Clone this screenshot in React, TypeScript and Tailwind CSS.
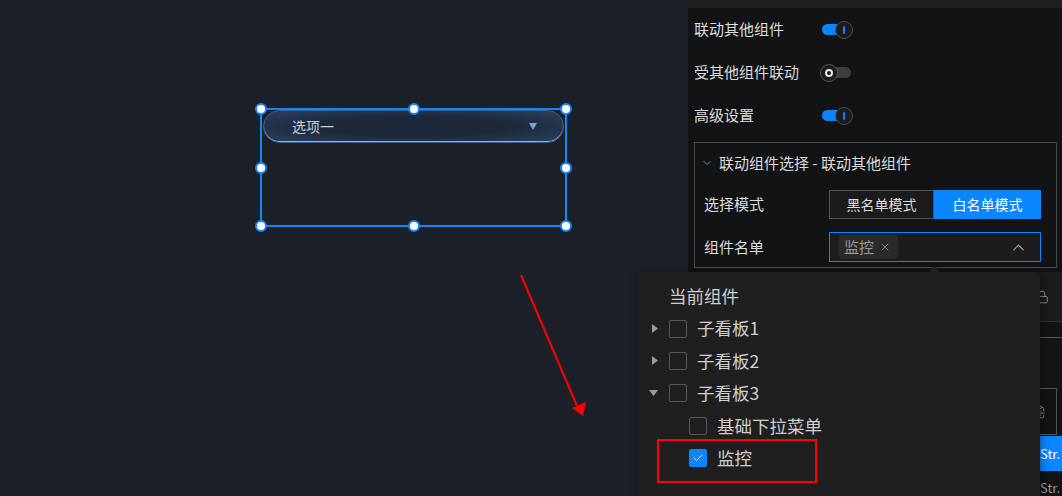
import React from "react";
import { ChevronDown, ChevronUp, X, Lock, Check, ClipboardCopy } from "lucide-react";

function ToggleOn() {
  return (
    <div className="relative w-[32px] h-[18px]">
      <div className="absolute left-[1px] top-[3.5px] w-[26px] h-[11px] rounded-full bg-[#0a84ff]" />
      <div className="absolute right-0 top-0 w-[18px] h-[18px] rounded-full bg-[#1b1c1e] border border-[#4d4d4d] flex items-center justify-center">
        <div className="w-[2px] h-[8px] bg-[#0a84ff] rounded-sm" />
      </div>
    </div>
  );
}

function ToggleOff() {
  return (
    <div className="relative w-[32px] h-[18px]">
      <div className="absolute right-[1px] top-[3.5px] w-[26px] h-[11px] rounded-full bg-[#3d3d3d]" />
      <div className="absolute left-0 top-0 w-[18px] h-[18px] rounded-full bg-[#1b1c1e] border border-[#555] flex items-center justify-center">
        <div className="w-[8px] h-[8px] rounded-full border-2 border-[#e8e8e8]" />
      </div>
    </div>
  );
}

function Handle({ cls }: { cls: string }) {
  return (
    <div
      className={
        "absolute w-[12px] h-[12px] rounded-full bg-white border-2 border-[#1786f5] " + cls
      }
    />
  );
}

function Box({ checked }: { checked?: boolean }) {
  if (checked)
    return (
      <div className="w-[18px] h-[18px] rounded-[2px] bg-[#0a86ff] flex items-center justify-center">
        <Check size={12} strokeWidth={1.6} color="#ffffff" />
      </div>
    );
  return <div className="w-[18px] h-[18px] rounded-[2px] border border-[#585858]" />;
}

function CaretRight() {
  return (
    <svg width="6" height="9" viewBox="0 0 6 9">
      <path d="M0 0 L6 4.5 L0 9 Z" fill="#9a9a9a" />
    </svg>
  );
}
function CaretDown() {
  return (
    <svg width="9" height="6" viewBox="0 0 9 6">
      <path d="M0 0 L9 0 L4.5 6 Z" fill="#9a9a9a" />
    </svg>
  );
}

export default function App() {
  return (
    <div className="relative w-[1062px] h-[496px] overflow-hidden flex font-['Noto_Sans_CJK_SC','Noto_Sans',sans-serif]">
      {/* Canvas */}
      <div className="relative w-[688px] h-full bg-[#1c2129]">
        <div className="absolute left-[260px] top-[108px] w-[307px] h-[119px] border-2 border-[#1786f5]">
          <div className="h-[33px] mx-[1px] rounded-full border border-[#3a5f92] bg-[radial-gradient(ellipse_at_center,#1d283a_45%,#2c4262_100%)] shadow-[inset_0_-1px_0_#8fb0d8] flex items-center pl-[28px] pr-[26px]">
            <span className="text-[14px] text-[#c6d1de] flex-1">选项一</span>
            <svg width="8" height="7" viewBox="0 0 8 7">
              <path d="M0 0 L8 0 L4 7 Z" fill="#6fa9ea" />
            </svg>
          </div>
          <Handle cls="-left-[7px] -top-[7px]" />
          <Handle cls="left-[146px] -top-[7px]" />
          <Handle cls="-right-[7px] -top-[7px]" />
          <Handle cls="-left-[7px] top-[52px]" />
          <Handle cls="-right-[7px] top-[52px]" />
          <Handle cls="-left-[7px] -bottom-[7px]" />
          <Handle cls="left-[146px] -bottom-[7px]" />
          <Handle cls="-right-[7px] -bottom-[7px]" />
        </div>
      </div>

      {/* Right panel */}
      <div className="w-[374px] h-full bg-[#121315] flex flex-col text-[15px] text-[#dcdcdc] overflow-hidden">
        <div className="shrink-0 h-[8px] bg-[#1e1f21]" />
        <div className="shrink-0 h-[43px] flex items-center pl-[6px]">
          <span className="w-[127px]">联动其他组件</span>
          <ToggleOn />
        </div>
        <div className="shrink-0 h-[43px] flex items-center pl-[6px]">
          <span className="w-[126px]">受其他组件联动</span>
          <ToggleOff />
        </div>
        <div className="shrink-0 h-[43px] flex items-center pl-[6px]">
          <span className="w-[127px]">高级设置</span>
          <ToggleOn />
        </div>

        <div className="shrink-0 mt-[5px] ml-[6px] mr-[5px] border border-[#4a4a4a] flex flex-col">
          <div className="h-[40px] flex items-center pl-[6px] gap-[6px]">
            <ChevronDown size={12} strokeWidth={1.5} color="#aaaaaa" />
            <span>联动组件选择 - 联动其他组件</span>
          </div>
          <div className="flex items-center pl-[9px] pt-[7px]">
            <span className="w-[125px]">选择模式</span>
            <div className="flex w-[212px] h-[29px] text-[14px]">
              <div className="flex-1 border border-[#555] bg-[#1b1b1b] flex items-center justify-center text-[#dcdcdc]">
                黑名单模式
              </div>
              <div className="w-[107px] bg-[#0a86ff] flex items-center justify-center text-white">
                白名单模式
              </div>
            </div>
          </div>
          <div className="flex items-center pl-[9px] mt-[13px] mb-[5px]">
            <span className="w-[125px]">组件名单</span>
            <div className="w-[212px] h-[30px] border border-[#0a86ff] bg-[#1c1c1c] flex items-center pl-[9px] pr-[12px]">
              <div className="h-[24px] rounded-[4px] bg-[#2a2a2a] flex items-center pl-[5px] pr-[7px] gap-[5px] text-[#9a9a9a]">
                <span>监控</span>
                <X size={12} strokeWidth={1.5} color="#9a9a9a" />
              </div>
              <div className="flex-1" />
              <ChevronUp size={19} strokeWidth={1.3} color="#b0b0b0" />
            </div>
          </div>
        </div>

        {/* lower panel content (mostly hidden by dropdown) */}
        <div className="shrink-0 mt-[4px] h-[50px] bg-[#1b1b1b] flex items-center justify-end pr-[13px] border-b border-[#333]">
          <Lock size={14} strokeWidth={1.5} color="#9a9a9a" />
        </div>
        <div className="shrink-0 h-[16px] border-b border-[#555]" />
        <div className="shrink-0 h-[50px] bg-[#141414]" />
        <div className="shrink-0 h-[47px] mr-[5px] border border-[#555] flex items-center justify-end pr-[10px]">
          <ClipboardCopy size={14} strokeWidth={1.5} color="#9a9a9a" />
        </div>
        <div className="shrink-0 mt-[1px] h-[35px] bg-[#0a86ff] flex items-center pl-[352px] text-[13px] text-white">
          Str.
        </div>
        <div className="shrink-0 h-[33px] flex items-center pl-[352px] text-[13px] text-[#9a9a9a]">Str.</div>
      </div>

      {/* Dropdown popup */}
      <div className="absolute left-[638px] top-[272px] w-[402px] h-[240px] rounded-[4px] bg-[#1f1f1f] shadow-[0_2px_8px_rgba(0,0,0,0.5)] pt-[8px] text-[17.5px] text-[#cfcfcf]">
        <svg className="absolute left-[290px] -top-[6px]" width="13" height="7" viewBox="0 0 13 7">
          <path d="M0 7 L6.5 0 L13 7 Z" fill="#1f1f1f" />
        </svg>
        <div className="h-[32.4px] flex items-center pl-[31px]">当前组件</div>
        <div className="h-[32.4px] flex items-center">
          <div className="w-[31px] flex justify-center pl-[2px]"><CaretRight /></div>
          <Box />
          <span className="ml-[10px]">子看板1</span>
        </div>
        <div className="h-[32.4px] flex items-center">
          <div className="w-[31px] flex justify-center pl-[2px]"><CaretRight /></div>
          <Box />
          <span className="ml-[10px]">子看板2</span>
        </div>
        <div className="h-[32.4px] flex items-center">
          <div className="w-[31px] flex justify-center"><CaretDown /></div>
          <Box />
          <span className="ml-[10px]">子看板3</span>
        </div>
        <div className="h-[32.4px] flex items-center pl-[51px]">
          <Box />
          <span className="ml-[10px]">基础下拉菜单</span>
        </div>
        <div className="h-[32.4px] flex items-center pl-[51px]">
          <Box checked />
          <span className="ml-[10px]">监控</span>
        </div>
        {/* annotation */}
        <div className="absolute left-[19px] top-[167px] w-[160px] h-[44px] border-2 border-[#ff0000]" />
      </div>

      {/* red arrow annotation */}
      <svg className="absolute left-0 top-0 pointer-events-none" width="1062" height="496">
        <line x1="521" y1="275" x2="577" y2="406" stroke="#ff0000" strokeWidth="2" />
        <path d="M572 408 L586 402 L583 416 Z" fill="#ff0000" />
      </svg>
    </div>
  );
}
